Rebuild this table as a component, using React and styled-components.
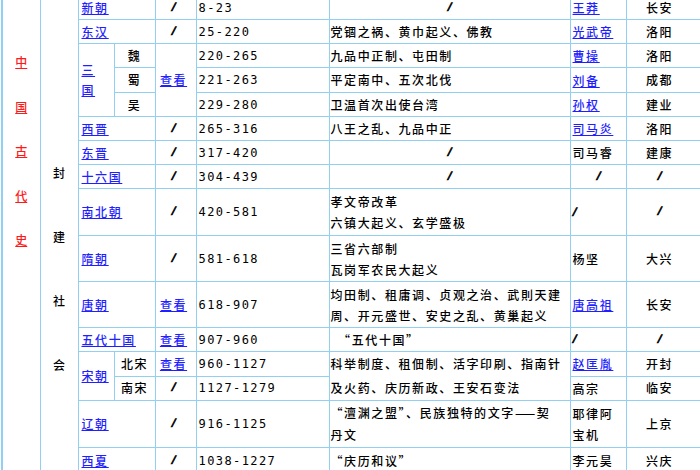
import React from "react";
import styled, { createGlobalStyle } from "styled-components";

const GlobalStyle = createGlobalStyle`
    body {
        margin: 0;
        background: #ffffff;
        font-family: "Noto Sans CJK SC", "Liberation Sans", sans-serif;
    }
`;

const rule = "#92d0f2";

const Viewport = styled.div`
    width: 700px;
    height: 470px;
    overflow: hidden;
`;

const HistoryTable = styled.table`
    border-collapse: collapse;
    table-layout: fixed;
    width: 703px;
    margin: -5px 0 0 1px;
    border-left: 2px solid ${rule};
`;

const Cell = styled.td`
    border: 1px solid ${rule};
    padding: 0;
    font-size: 12px;
    font-weight: 500;
    line-height: 16px;
    letter-spacing: 1.6px;
    color: #000;
    white-space: nowrap;
    vertical-align: middle;
`;

const EraCell = styled(Cell)`
    vertical-align: top;
    padding-top: 59px;
`;

const StageCell = styled(Cell)`
    vertical-align: top;
    padding-top: 170px;
`;

const CharColumn = styled.div`
    display: flex;
    flex-direction: column;
    align-items: center;
    gap: ${(p) => p.$gap}px;
    line-height: 14px;
    letter-spacing: 0;
`;

const RedChar = styled.span`
    color: #ff1a1a;
    text-decoration: underline;
`;

const NameCell = styled(Cell)`
    padding-left: 3px;
    line-height: ${(p) => (p.$tall ? "20px" : "16px")};
`;

const SubCell = styled(Cell)`
    text-align: center;
`;

const ViewCell = styled(Cell)`
    text-align: center;
    padding-right: 4px;
`;

const DateCell = styled(Cell)`
    padding-left: 2px;
    font-family: "DejaVu Sans Mono", monospace;
    font-weight: normal;
    letter-spacing: 1.4px;
`;

const EventCell = styled(Cell)`
    padding-left: 1px;
    line-height: ${(p) => p.$lh || 16}px;
    text-align: ${(p) => (p.$center ? "center" : "left")};
`;

const RulerCell = styled(Cell)`
    padding-left: 2px;
    line-height: 21px;
    text-align: ${(p) => (p.$center ? "center" : "left")};
`;

const CapitalCell = styled(Cell)`
    text-align: center;
    padding-right: 12px;
`;

const Row = styled.tr`
    height: ${(p) => p.$h || 24}px;
`;

const Link = styled.a`
    color: #1f1fff;
    text-decoration: underline;
    cursor: pointer;
`;

const Slash = styled.span`
    display: inline-block;
    font-family: "DejaVu Sans", sans-serif;
    font-weight: 900;
    font-size: 10px;
    letter-spacing: 0;
    color: #000;
    -webkit-text-stroke: 0.7px #000;
    transform: translateY(-2px) skewX(-12deg);
`;

const S = () => <Slash>/</Slash>;

const App = () => {
    return (
        <Viewport>
            <GlobalStyle />
            <HistoryTable>
                <colgroup>
                    <col style={{ width: 38 }} />
                    <col style={{ width: 38 }} />
                    <col style={{ width: 36 }} />
                    <col style={{ width: 41 }} />
                    <col style={{ width: 41 }} />
                    <col style={{ width: 133 }} />
                    <col style={{ width: 241 }} />
                    <col style={{ width: 56 }} />
                    <col style={{ width: 79 }} />
                </colgroup>
                <tbody>
                    <Row>
                        <EraCell rowSpan={16}>
                            <CharColumn $gap={30.5}>
                                {"中国古代史".split("").map((c) => (
                                    <RedChar key={c}>{c}</RedChar>
                                ))}
                            </CharColumn>
                        </EraCell>
                        <StageCell rowSpan={16}>
                            <CharColumn $gap={50}>
                                {"封建社会".split("").map((c) => (
                                    <span key={c}>{c}</span>
                                ))}
                            </CharColumn>
                        </StageCell>
                        <NameCell colSpan={2}><Link>新朝</Link></NameCell>
                        <ViewCell><S /></ViewCell>
                        <DateCell>8-23</DateCell>
                        <EventCell $center><S /></EventCell>
                        <RulerCell><Link>王莽</Link></RulerCell>
                        <CapitalCell>长安</CapitalCell>
                    </Row>
                    <Row>
                        <NameCell colSpan={2}><Link>东汉</Link></NameCell>
                        <ViewCell><S /></ViewCell>
                        <DateCell>25-220</DateCell>
                        <EventCell>党锢之祸、黄巾起义、佛教</EventCell>
                        <RulerCell><Link>光武帝</Link></RulerCell>
                        <CapitalCell>洛阳</CapitalCell>
                    </Row>
                    <Row>
                        <NameCell rowSpan={3} $tall>
                            <Link>三</Link>
                            <br />
                            <Link>国</Link>
                        </NameCell>
                        <SubCell>魏</SubCell>
                        <ViewCell rowSpan={3}><Link>查看</Link></ViewCell>
                        <DateCell>220-265</DateCell>
                        <EventCell>九品中正制、屯田制</EventCell>
                        <RulerCell><Link>曹操</Link></RulerCell>
                        <CapitalCell>洛阳</CapitalCell>
                    </Row>
                    <Row $h={25}>
                        <SubCell>蜀</SubCell>
                        <DateCell>221-263</DateCell>
                        <EventCell>平定南中、五次北伐</EventCell>
                        <RulerCell><Link>刘备</Link></RulerCell>
                        <CapitalCell>成都</CapitalCell>
                    </Row>
                    <Row>
                        <SubCell>吴</SubCell>
                        <DateCell>229-280</DateCell>
                        <EventCell>卫温首次出使台湾</EventCell>
                        <RulerCell><Link>孙权</Link></RulerCell>
                        <CapitalCell>建业</CapitalCell>
                    </Row>
                    <Row>
                        <NameCell colSpan={2}><Link>西晋</Link></NameCell>
                        <ViewCell><S /></ViewCell>
                        <DateCell>265-316</DateCell>
                        <EventCell>八王之乱、九品中正</EventCell>
                        <RulerCell><Link>司马炎</Link></RulerCell>
                        <CapitalCell>洛阳</CapitalCell>
                    </Row>
                    <Row>
                        <NameCell colSpan={2}><Link>东晋</Link></NameCell>
                        <ViewCell><S /></ViewCell>
                        <DateCell>317-420</DateCell>
                        <EventCell $center><S /></EventCell>
                        <RulerCell>司马睿</RulerCell>
                        <CapitalCell>建康</CapitalCell>
                    </Row>
                    <Row>
                        <NameCell colSpan={2}><Link>十六国</Link></NameCell>
                        <ViewCell><S /></ViewCell>
                        <DateCell>304-439</DateCell>
                        <EventCell $center><S /></EventCell>
                        <RulerCell $center><S /></RulerCell>
                        <CapitalCell><S /></CapitalCell>
                    </Row>
                    <Row $h={47}>
                        <NameCell colSpan={2}><Link>南北朝</Link></NameCell>
                        <ViewCell><S /></ViewCell>
                        <DateCell>420-581</DateCell>
                        <EventCell $lh={21}>
                            孝文帝改革
                            <br />
                            六镇大起义、玄学盛极
                        </EventCell>
                        <RulerCell><S /></RulerCell>
                        <CapitalCell><S /></CapitalCell>
                    </Row>
                    <Row $h={46}>
                        <NameCell colSpan={2}><Link>隋朝</Link></NameCell>
                        <ViewCell><S /></ViewCell>
                        <DateCell>581-618</DateCell>
                        <EventCell $lh={21}>
                            三省六部制
                            <br />
                            瓦岗军农民大起义
                        </EventCell>
                        <RulerCell>杨坚</RulerCell>
                        <CapitalCell>大兴</CapitalCell>
                    </Row>
                    <Row $h={46}>
                        <NameCell colSpan={2}><Link>唐朝</Link></NameCell>
                        <ViewCell><Link>查看</Link></ViewCell>
                        <DateCell>618-907</DateCell>
                        <EventCell $lh={21}>
                            均田制、租庸调、贞观之治、武則天建
                            <br />
                            周、开元盛世、安史之乱、黄巢起义
                        </EventCell>
                        <RulerCell><Link>唐高祖</Link></RulerCell>
                        <CapitalCell>长安</CapitalCell>
                    </Row>
                    <Row>
                        <NameCell colSpan={2}><Link>五代十国</Link></NameCell>
                        <ViewCell><Link>查看</Link></ViewCell>
                        <DateCell>907-960</DateCell>
                        <EventCell>　“五代十国”</EventCell>
                        <RulerCell><S /></RulerCell>
                        <CapitalCell><S /></CapitalCell>
                    </Row>
                    <Row>
                        <NameCell rowSpan={2}><Link>宋朝</Link></NameCell>
                        <SubCell>北宋</SubCell>
                        <ViewCell><Link>查看</Link></ViewCell>
                        <DateCell>960-1127</DateCell>
                        <EventCell rowSpan={2} $lh={24}>
                            科举制度、租佃制、活字印刷、指南针
                            <br />
                            及火药、庆历新政、王安石变法
                        </EventCell>
                        <RulerCell><Link>赵匡胤</Link></RulerCell>
                        <CapitalCell>开封</CapitalCell>
                    </Row>
                    <Row>
                        <SubCell>南宋</SubCell>
                        <ViewCell><S /></ViewCell>
                        <DateCell>1127-1279</DateCell>
                        <RulerCell>高宗</RulerCell>
                        <CapitalCell>临安</CapitalCell>
                    </Row>
                    <Row $h={47}>
                        <NameCell colSpan={2}><Link>辽朝</Link></NameCell>
                        <ViewCell><S /></ViewCell>
                        <DateCell>916-1125</DateCell>
                        <EventCell $lh={22}>
                            “澶渊之盟”、民族独特的文字——契
                            <br />
                            丹文
                        </EventCell>
                        <RulerCell>
                            耶律阿
                            <br />
                            宝机
                        </RulerCell>
                        <CapitalCell>上京</CapitalCell>
                    </Row>
                    <Row $h={26}>
                        <NameCell colSpan={2}><Link>西夏</Link></NameCell>
                        <ViewCell><S /></ViewCell>
                        <DateCell>1038-1227</DateCell>
                        <EventCell>“庆历和议”</EventCell>
                        <RulerCell>李元昊</RulerCell>
                        <CapitalCell>兴庆</CapitalCell>
                    </Row>
                </tbody>
            </HistoryTable>
        </Viewport>
    );
};

export default App;
